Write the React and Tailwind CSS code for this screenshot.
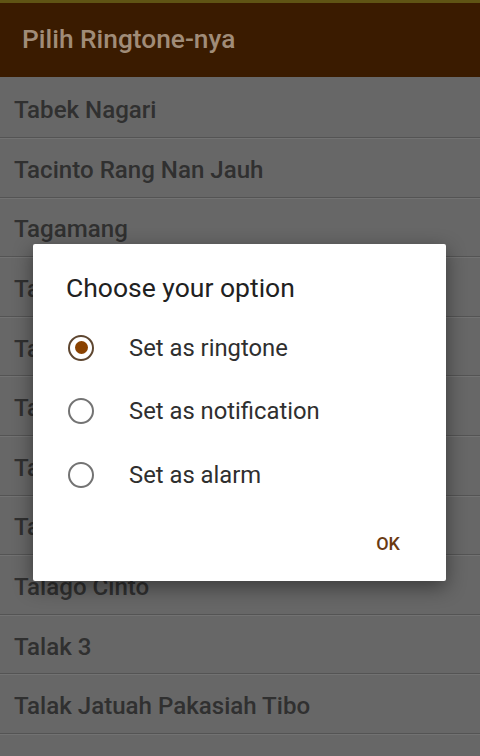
import React from "react";

const rows = [
  "Tabek Nagari",
  "Tacinto Rang Nan Jauh",
  "Tagamang",
  "Takana Kampuang",
  "Takicuah di Nan Tarang",
  "Talabiah Sayang",
  "Talago Biru",
  "Talago Ameh",
  "Talago Cinto",
  "Talak 3",
  "Talak Jatuah Pakasiah Tibo",
  "",
];

function Radio({ checked }) {
  return (
    <div
      className={
        "w-[26px] h-[26px] rounded-full border-[2.5px] flex items-center justify-center " +
        (checked ? "border-[#5e4630]" : "border-[#737373]")
      }
    >
      {checked && <div className="w-[13px] h-[13px] rounded-full bg-[#8a4200]" />}
    </div>
  );
}

export default function App() {
  return (
    <div
      className="relative w-[480px] h-[756px] overflow-hidden bg-[#676767]"
      style={{ fontFamily: "Roboto, 'Noto Sans', sans-serif" }}
    >
      <div className="h-[3px] bg-[#5f5414]" />
      <div className="h-[74px] bg-[#3a1b00] flex items-center pl-[22px]">
        <span className="text-[26.3px] text-[#a08c78] font-medium">
          Pilih Ringtone-nya
        </span>
      </div>
      <div className="flex flex-col pt-[1.5px]">
        {rows.map((r, i) => (
          <div
            key={i}
            className="h-[59.6px] shrink-0 flex items-center pl-[14px] pt-[5px] border-b border-[#545454] shadow-[0_1px_0_#727272]"
          >
            <span className="text-[24.1px] font-medium text-[#303030]">{r}</span>
          </div>
        ))}
      </div>

      <div className="absolute left-[33px] top-[244px] w-[413px] h-[337px] bg-white rounded-[2px] shadow-[0_6px_20px_rgba(0,0,0,0.45)] flex flex-col">
        <div className="pl-[33px] pt-[27px] h-[72px] text-[26.5px] text-[#212121] leading-[34px]">
          Choose your option
        </div>
        <div className="flex flex-col pl-[35px]">
          {[
            ["Set as ringtone", true],
            ["Set as notification", false],
            ["Set as alarm", false],
          ].map(([t, c]) => (
            <div key={t} className="h-[63.5px] flex items-center">
              <Radio checked={c} />
              <span className="ml-[35px] pt-[2px] text-[23.8px] text-[#2f2f2f]">{t}</span>
            </div>
          ))}
        </div>
        <div className="flex justify-end pr-[46px] pt-[23px]">
          <span className="text-[18px] font-medium text-[#6a3a12]">OK</span>
        </div>
      </div>
    </div>
  );
}
